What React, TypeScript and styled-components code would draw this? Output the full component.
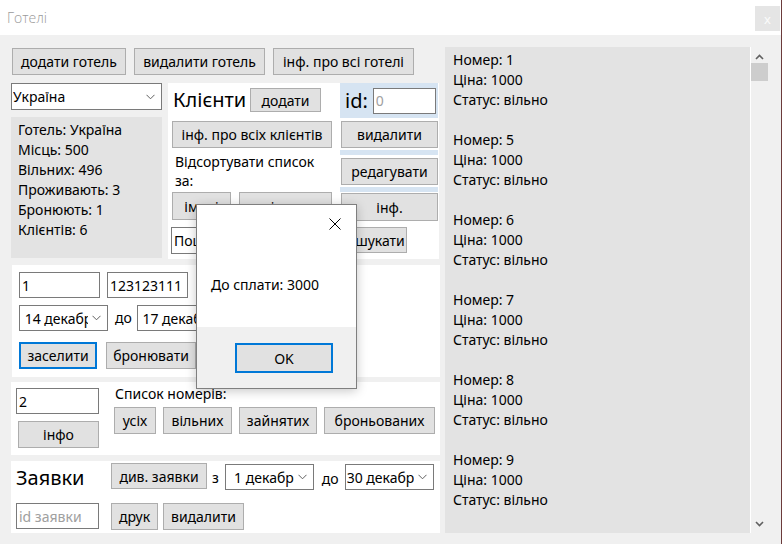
import React from 'react';
import styled, { createGlobalStyle, css } from 'styled-components';

const FONT = `"Noto Sans", "DejaVu Sans", sans-serif`;

const Global = createGlobalStyle`
  html, body { margin: 0; padding: 0; background: #f0f0f0; }
  * { box-sizing: border-box; }
`;

const Window = styled.div`
  position: relative;
  width: 782px;
  height: 544px;
  overflow: hidden;
  background: #f0f0f0;
  border-right: 1px solid #6b3b3b;
  font-family: ${FONT};
  font-size: 14px;
  color: #000;
`;

const TitleBar = styled.div`
  height: 35px;
  background: #fff;
  display: flex;
  justify-content: space-between;
  align-items: flex-start;
  padding: 0 1px 0 7px;
`;

const Title = styled.span`
  font-family: "Open Sans", ${FONT};
  font-weight: 300;
  font-size: 14px;
  line-height: 35px;
  color: #9a9a9a;
`;

const CloseBtn = styled.div`
  width: 25px;
  height: 25px;
  margin-top: 6px;
  background: #e5e5e5;
  color: #fbfbfb;
  font-size: 13px;
  display: flex;
  align-items: center;
  justify-content: center;
`;

const Body = styled.div`
  display: flex;
  gap: 4px;
  height: 509px;
  padding: 12px 0 0 11px;
`;

const LeftCol = styled.div`
  width: 430px;
  display: flex;
  flex-direction: column;
`;

const Row = styled.div<{ $gap?: number; $mt?: number; $ml?: number; $align?: string }>`
  display: flex;
  align-items: ${(p) => p.$align ?? 'flex-start'};
  gap: ${(p) => p.$gap ?? 0}px;
  margin-top: ${(p) => p.$mt ?? 0}px;
  margin-left: ${(p) => p.$ml ?? 0}px;
`;

const Col = styled.div<{ $w?: number; $mt?: number; $ml?: number; $pl?: number }>`
  display: flex;
  flex-direction: column;
  align-items: flex-start;
  ${(p) => (p.$w ? `width: ${p.$w}px; flex: none;` : '')}
  margin-top: ${(p) => p.$mt ?? 0}px;
  margin-left: ${(p) => p.$ml ?? 0}px;
  padding-left: ${(p) => p.$pl ?? 0}px;
`;

const Btn = styled.button<{ $w: number; $h?: number; $focus?: boolean; $mt?: number; $ml?: number }>`
  flex: none;
  width: ${(p) => p.$w}px;
  height: ${(p) => p.$h ?? 27}px;
  margin-top: ${(p) => p.$mt ?? 0}px;
  margin-left: ${(p) => p.$ml ?? 0}px;
  padding: 0;
  background: #e1e1e1;
  border: 1px solid #adadad;
  font-family: ${FONT};
  font-size: 14px;
  color: #000;
  white-space: nowrap;
  overflow: hidden;
  ${(p) =>
    p.$focus &&
    css`
      border: 2px solid #0078d7;
    `}
`;

const TextBox = styled.input<{ $w: number; $h?: number; $mt?: number }>`
  flex: none;
  width: ${(p) => p.$w}px;
  height: ${(p) => p.$h ?? 26}px;
  margin: ${(p) => p.$mt ?? 0}px 0 0 0;
  padding: 0 0 0 2px;
  background: #fff;
  border: 1px solid #7a7a7a;
  font-family: ${FONT};
  font-size: 14px;
  color: #000;
  outline: none;
  &::placeholder {
    color: #a0a0a0;
  }
`;

const Combo = styled.div<{ $w: number; $h?: number }>`
  flex: none;
  width: ${(p) => p.$w}px;
  height: ${(p) => p.$h ?? 26}px;
  background: #fff;
  border: 1px solid #7a7a7a;
  display: flex;
  align-items: center;
  padding-left: 1px;
  overflow: hidden;
`;

const ComboText = styled.span`
  flex: 1;
  min-width: 0;
  overflow: hidden;
  white-space: pre;
  font-size: 14px;
`;

const Chevron = styled.svg`
  flex: none;
  width: 9px;
  height: 6px;
  margin: 0 6px 0 4px;
`;

const Label = styled.span<{ $lh?: number; $size?: number; $w?: number }>`
  flex: none;
  font-size: ${(p) => p.$size ?? 14}px;
  line-height: ${(p) => p.$lh ?? 20}px;
  ${(p) => (p.$w ? `width: ${p.$w}px;` : '')}
  white-space: ${(p) => (p.$w ? 'normal' : 'nowrap')};
`;

const Panel = styled.div<{ $w: number; $h: number; $mt?: number; $ml?: number; $bg?: string }>`
  flex: none;
  width: ${(p) => p.$w}px;
  height: ${(p) => p.$h}px;
  margin-top: ${(p) => p.$mt ?? 0}px;
  margin-left: ${(p) => p.$ml ?? 0}px;
  background: ${(p) => p.$bg ?? '#fff'};
`;

const InfoPanel = styled.div`
  height: 141px;
  width: 151px;
  background: #e3e3e3;
  padding: 3px 7px;
  line-height: 20px;
  font-size: 14px;
`;

const BlueBox = styled.div`
  width: 98px;
  height: 35px;
  background: #d6e4f2;
  display: flex;
  align-items: center;
  gap: 5px;
  padding-left: 5px;
`;

const BlueStrip = styled.div<{ $mt: number }>`
  width: 98px;
  height: 5px;
  margin-top: ${(p) => p.$mt}px;
  background: #d6e4f2;
`;

const ListArea = styled.div`
  display: flex;
  height: 486px;
`;

const List = styled.div`
  width: 306px;
  height: 486px;
  background: #e3e3e3;
  padding: 3px 8px;
  line-height: 20px;
  font-size: 14px;
  overflow: hidden;
  border-right: 1px solid #fff;
`;

const Entry = styled.div`
  margin-bottom: 20px;
`;

const ScrollBar = styled.div`
  width: 17px;
  height: 486px;
  display: flex;
  flex-direction: column;
  align-items: center;
  background: #f0f0f0;
`;

const Arrow = styled.svg<{ $mt: number; $mb?: number }>`
  width: 9px;
  height: 6px;
  margin-top: ${(p) => p.$mt}px;
  margin-bottom: ${(p) => p.$mb ?? 0}px;
`;

const Thumb = styled.div`
  width: 17px;
  height: 18px;
  margin-top: 3px;
  background: #cdcdcd;
`;

const Spacer = styled.div`
  flex: 1;
`;

const Dialog = styled.div`
  position: absolute;
  left: 196px;
  top: 204px;
  width: 161px;
  height: 185px;
  border: 1px solid #7f7f7f;
  box-shadow: 0 2px 10px rgba(0, 0, 0, 0.22);
  display: flex;
  flex-direction: column;
  background: #f0f0f0;
`;

const DialogTop = styled.div`
  height: 122px;
  background: #fff;
  position: relative;
  padding: 70px 0 0 14px;
`;

const DialogClose = styled.svg`
  position: absolute;
  right: 15px;
  top: 13px;
  width: 12px;
  height: 12px;
`;

const DialogBottom = styled.div`
  flex: 1;
  display: flex;
  padding: 16px 0 0 38px;
`;

const ChevronIcon = () => (
  <Chevron viewBox="0 0 9 6">
    <polyline points="0.5,0.8 4.5,4.8 8.5,0.8" fill="none" stroke="#606060" strokeWidth="1" />
  </Chevron>
);

const rooms = [1, 5, 6, 7, 8, 9];

export default function App() {
  return (
    <Window>
      <Global />
      <TitleBar>
        <Title>Готелі</Title>
        <CloseBtn>x</CloseBtn>
      </TitleBar>
      <Body>
        <LeftCol>
          <Row $gap={8} $mt={1} $ml={1}>
            <Btn $w={114}>додати готель</Btn>
            <Btn $w={131}>видалити готель</Btn>
            <Btn $w={141}>інф. про всі готелі</Btn>
          </Row>

          <Row $gap={6} $mt={8}>
            <Col $w={151}>
              <Combo $w={151} $h={27}>
                <ComboText>Україна</ComboText>
                <ChevronIcon />
              </Combo>
              <Col $mt={7}>
                <InfoPanel>
                  <div>Готель: Україна</div>
                  <div>Місць: 500</div>
                  <div>Вільних: 496</div>
                  <div>Проживають: 3</div>
                  <div>Бронюють: 1</div>
                  <div>Клієнтів: 6</div>
                </InfoPanel>
              </Col>
            </Col>

            <Panel $w={271} $h={176}>
              <Row>
                <Col $w={172} $pl={4}>
                  <Row $mt={5} $ml={1}>
                    <Label $size={20} $lh={24} $w={77}>Клієнти</Label>
                    <Btn $w={71} $h={24}>додати</Btn>
                  </Row>
                  <Btn $w={160} $mt={9}>інф. про всіх клієнтів</Btn>
                  <Col $mt={4} $ml={3}>
                    <Label $lh={19} $w={150}>Відсортувати список за:</Label>
                  </Col>
                  <Row $gap={8} $mt={2}>
                    <Btn $w={59} $h={28}>імені</Btn>
                    <Btn $w={93} $h={28}>прізвищу</Btn>
                  </Row>
                </Col>
                <Col $w={98}>
                  <BlueBox>
                    <Label $size={20} $lh={24}>id:</Label>
                    <TextBox $w={63} placeholder="0" readOnly />
                  </BlueBox>
                  <Btn $w={97} $mt={3} $ml={1}>видалити</Btn>
                  <BlueStrip $mt={2} />
                  <Btn $w={97} $mt={3} $ml={1}>редагувати</Btn>
                  <BlueStrip $mt={2} />
                  <Btn $w={97} $h={28} $mt={1} $ml={1}>інф.</Btn>
                </Col>
              </Row>
              <Row $gap={8} $mt={6} $ml={3}>
                <TextBox $w={174} $h={27} defaultValue="Пошук" readOnly />
                <Btn $w={54} $h={26}>шукати</Btn>
              </Row>
            </Panel>
          </Row>

          <Panel $w={428} $h={112} $mt={6} $ml={1}>
            <Col $pl={7}>
              <Row $gap={7} $mt={7}>
                <TextBox $w={81} defaultValue="1" readOnly />
                <TextBox $w={81} defaultValue="123123111" readOnly />
              </Row>
              <Row $mt={7} $align="center">
                <Combo $w={89}>
                  <ComboText> 14 декабря</ComboText>
                  <ChevronIcon />
                </Combo>
                <Label style={{ margin: '0 5px 0 7px' }}>до</Label>
                <Combo $w={89}>
                  <ComboText> 17 декабря</ComboText>
                  <ChevronIcon />
                </Combo>
              </Row>
              <Row $gap={9} $mt={11}>
                <Btn $w={78} $focus>
                  заселити
                </Btn>
                <Btn $w={90}>бронювати</Btn>
              </Row>
            </Col>
          </Panel>

          <Panel $w={429} $h={73} $mt={5}>
            <Row $ml={5}>
              <Col $w={83} $mt={6}>
                <TextBox $w={83} defaultValue="2" readOnly />
                <Btn $w={81} $mt={7} $ml={2}>інфо</Btn>
              </Col>
              <Col $ml={15} $mt={2}>
                <Label $lh={19} style={{ marginLeft: 1 }}>Список номерів:</Label>
                <Row $gap={7} $mt={4}>
                  <Btn $w={42}>усіх</Btn>
                  <Btn $w={69}>вільних</Btn>
                  <Btn $w={78}>зайнятих</Btn>
                  <Btn $w={111}>броньованих</Btn>
                </Row>
              </Col>
            </Row>
          </Panel>

          <Panel $w={429} $h={72} $mt={6}>
            <Col $pl={5}>
              <Row $mt={2} $align="flex-start">
                <Label $size={20} $lh={30} $w={95}>Заявки</Label>
                <Btn $w={96} $h={26}>див. заявки</Btn>
                <Label $lh={30} style={{ margin: '0 6px 0 5px' }}>з</Label>
                <Col $mt={1}>
                  <Combo $w={89}>
                    <ComboText>  1 декабря</ComboText>
                    <ChevronIcon />
                  </Combo>
                </Col>
                <Label $lh={32} style={{ margin: '0 6px 0 8px' }}>до</Label>
                <Col $mt={1}>
                  <Combo $w={89}>
                    <ComboText>30 декабря</ComboText>
                    <ChevronIcon />
                  </Combo>
                </Col>
              </Row>
              <Row $mt={8}>
                <TextBox $w={83} placeholder="id заявки" readOnly />
                <Btn $w={47} $ml={12}>друк</Btn>
                <Btn $w={81} $ml={5}>видалити</Btn>
              </Row>
            </Col>
          </Panel>
        </LeftCol>

        <ListArea>
          <List>
            {rooms.map((n) => (
              <Entry key={n}>
                <div>Номер: {n}</div>
                <div>Ціна: 1000</div>
                <div>Статус: вільно</div>
              </Entry>
            ))}
          </List>
          <ScrollBar>
            <Arrow $mt={7} viewBox="0 0 9 6">
              <polyline points="1,5 4.5,1.5 8,5" fill="none" stroke="#606060" strokeWidth="1.6" />
            </Arrow>
            <Thumb />
            <Spacer />
            <Arrow $mt={0} $mb={6} viewBox="0 0 9 6">
              <polyline points="1,1 4.5,4.5 8,1" fill="none" stroke="#606060" strokeWidth="1.6" />
            </Arrow>
          </ScrollBar>
        </ListArea>
      </Body>

      <Dialog>
        <DialogTop>
          <DialogClose viewBox="0 0 12 12">
            <path d="M0.5 0.5 L11.5 11.5 M11.5 0.5 L0.5 11.5" stroke="#000" strokeWidth="1" />
          </DialogClose>
          <Label>До сплати: 3000</Label>
        </DialogTop>
        <DialogBottom>
          <Btn $w={98} $h={30} $focus>
            OK
          </Btn>
        </DialogBottom>
      </Dialog>
    </Window>
  );
}
